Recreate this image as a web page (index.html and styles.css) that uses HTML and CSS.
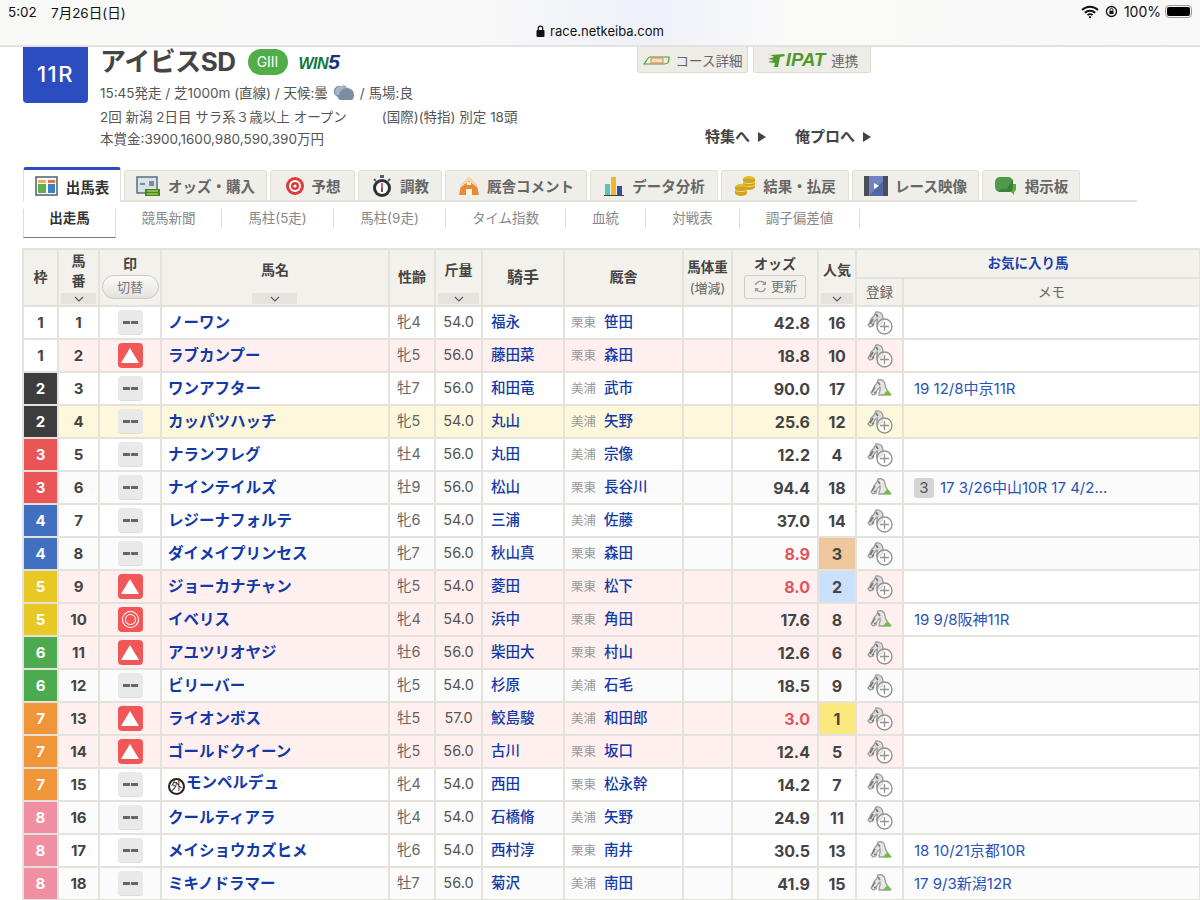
FILE: index.html
```html
<!DOCTYPE html>
<html lang="ja">
<head>
  <meta charset="UTF-8" />
  <title>アイビスSD 出馬表</title>
  <link rel="stylesheet" href="styles.css">
</head>
<body>
  <!-- 共通アイコン -->
  <svg class="sprite" width="0" height="0">
    <symbol id="horse-add" viewBox="0 0 26 24">
      <path d="M9 1c4-1 7 2 7 6 0 2 0 4-1 5l-5 3c-1-3 1-5 0-7l-3 3-1 4-3 1-2-2 2-3 1-3 3-3z" fill="#dcdcda" stroke="#9a9a98" stroke-width="1.300"/>
      <path d="M6 8l-3 5M9 3l2 3M7 13l-2 1" stroke="#777775" stroke-width="1.700" fill="none"/>
      <circle cx="17.500" cy="15.500" r="7.500" fill="#fff" fill-opacity=".6" stroke="#949492" stroke-width="1.400"/>
      <path d="M17.500 11v9M13 15.500h9" stroke="#949492" stroke-width="1.300"/>
    </symbol>
    <symbol id="horse-done" viewBox="0 0 26 24">
      <path d="M11 3c4-1 7 1 7 5 0 3 3 6 5 10H12c0-4 2-5 1-8l-3 3-1 4-3 1-2-2 2-3 1-3 3-4z" fill="#e6e6e3" stroke="#a0a09e" stroke-width="1.300"/>
      <path d="M8 10l-3 5M11 5l2 3M9 15l-2 1" stroke="#808080" stroke-width="1.700" fill="none"/>
      <path d="M16 18l4.500-5 4.500 5z" fill="#6fbf45"/>
    </symbol>
    <symbol id="chev" viewBox="0 0 10 6">
      <path d="M1 1l4 4 4-4" fill="none" stroke="#555" stroke-width="1.100"/>
    </symbol>
  </svg>

  <!-- ステータスバー -->
  <div class="statusbar">
    <div class="status-row">
      <span class="status-time">5:02</span>
      <span class="status-date">7月26日(日)</span>
      <span class="status-right">
        <svg width="18" height="13" viewBox="0 0 18 13"><path d="M1 5a11.500 11.500 0 0 1 16 0M3.800 7.800a7.500 7.500 0 0 1 10.400 0M6.500 10.200a3.500 3.500 0 0 1 5 0" fill="none" stroke="#111" stroke-width="1.900"/><circle cx="9" cy="12" r="1.100" fill="#111"/></svg>
        <svg width="13" height="13" viewBox="0 0 13 13"><circle cx="6.500" cy="6.500" r="5" fill="none" stroke="#111" stroke-width="1.300"/><rect x="4.400" y="5.800" width="4.200" height="3.300" fill="#111"/><path d="M5.200 5.800V4.700a1.300 1.300 0 0 1 2.600 0v1.100" fill="none" stroke="#111"/></svg>
        <span class="status-pct">100%</span>
        <span class="battery"><span class="battery-fill"></span></span>
      </span>
    </div>
    <div class="status-url">
      <svg width="9" height="12" viewBox="0 0 9 12"><rect x="0.500" y="5" width="8" height="7" rx="1" fill="#111"/><path d="M2.300 5V3.300a2.200 2.200 0 0 1 4.400 0V5" fill="none" stroke="#111" stroke-width="1.200"/></svg>
      <span>race.netkeiba.com</span>
    </div>
  </div>

  <!-- レース情報 -->
  <div class="race-head">
    <div class="race-num">11R</div>
    <div class="race-info">
      <div class="race-title">
        <h1>アイビスSD</h1>
        <span class="grade">GIII</span>
        <span class="win5"><b>WIN</b><i>5</i></span>
      </div>
      <div class="race-data1">
        15:45発走 / 芝1000m (直線) / 天候:曇
        <svg class="weather" width="22" height="17" viewBox="0 0 22 17"><path d="M5 13a5 5 0 0 1 3-11c2-1 5-1 6 2 4 0 7 3 7 7 0 3-1 5-3 5H8c-2 0-3-1-3-3z" fill="#7b8ea1"/><path d="M3 11a6 6 0 0 1 6-9c2 0 4 1 5 2-4 0-7 3-8 7z" fill="#a8b6c4"/></svg>
        / 馬場:良
      </div>
      <div class="race-data2"><span class="race-cond">2回 新潟 2日目 サラ系３歳以上 オープン</span><span>(国際)(特指) 別定 18頭</span></div>
      <div class="race-data2">本賞金:3900,1600,980,590,390万円</div>
    </div>
    <div class="race-side">
      <div class="race-btns">
        <a class="race-btn btn-course">
          <svg width="28" height="10" viewBox="0 0 28 10"><path d="M1 9h20c4 0 5-1 5-7H7C5 2 4 5 1 9z" fill="none" stroke="#4f9e3c" stroke-width="1.200"/><rect x="8" y="3" width="12" height="5" fill="#f3dcc0" stroke="#d98b4a"/></svg>
          コース詳細
        </a>
        <a class="race-btn btn-ipat">
          <svg width="20" height="16" viewBox="0 0 20 16"><path d="M1 1l4 2 13-1 1 2-5 1-2 10H8l1-4-7-1 6-2-6-1 6-2z" fill="#4d9a2a"/></svg>
          <b class="ipat-logo">IPAT</b>
          連携
        </a>
      </div>
      <div class="race-links">
        <a>特集へ<span class="tri-right"></span></a>
        <a>俺プロへ<span class="tri-right"></span></a>
      </div>
    </div>
  </div>

  <!-- タブ -->
  <div class="tabs">
    <a class="tab tab-active">
      <svg width="24" height="22" viewBox="0 0 24 22"><rect x="1" y="2" width="21" height="18" fill="#fff" stroke="#4a5f70" stroke-width="1.500"/><rect x="3" y="5" width="8" height="3" fill="#f0b23c"/><rect x="3" y="9" width="8" height="9" fill="#5fb04a"/><rect x="13" y="5" width="7" height="3" fill="#e8703a"/><rect x="13" y="9" width="7" height="9" fill="#3c7fc4"/></svg>
      出馬表
    </a>
    <a class="tab">
      <svg width="25" height="22" viewBox="0 0 25 22"><rect x="1" y="2" width="20" height="16" fill="#d8e2ea" stroke="#5c6f7e" stroke-width="1.500"/><rect x="4" y="8" width="5" height="2" fill="#7a8c9a"/><rect x="13" y="6" width="5" height="5" fill="#7a8c9a"/><rect x="9" y="14" width="15" height="7" fill="#3f8a1e"/><path d="M11 16h11M11 19h11" stroke="#e6e36a"/></svg>
      オッズ・購入
    </a>
    <a class="tab">
      <svg width="20" height="22" viewBox="0 0 20 22"><circle cx="10" cy="11" r="9" fill="#e03a3a"/><circle cx="10" cy="11" r="6" fill="#fff"/><circle cx="10" cy="11" r="4" fill="#e03a3a"/><circle cx="10" cy="11" r="1.600" fill="#fff"/></svg>
      予想
    </a>
    <a class="tab">
      <svg width="22" height="24" viewBox="0 0 22 24"><circle cx="11" cy="14" r="9" fill="#2a3138"/><circle cx="11" cy="14" r="6" fill="#fff"/><path d="M11 14V9" stroke="#d33" stroke-width="1.600"/><path d="M11 14v4" stroke="#333" stroke-width="1.600"/><rect x="9" y="1" width="4" height="3" fill="#55606a"/><path d="M3 5l2 2M19 5l-2 2" stroke="#55606a" stroke-width="2"/></svg>
      調教
    </a>
    <a class="tab">
      <svg width="22" height="22" viewBox="0 0 22 22"><path d="M1 20l2-10 8-8 8 8 2 10z" fill="#e88a3a"/><path d="M3 10l8-8 8 8 1 3-9-7-9 7z" fill="#f4d9b8"/><rect x="8" y="14" width="6" height="6" fill="#fff3d8"/><rect x="9" y="7" width="4" height="3" fill="#fff3d8"/></svg>
      厩舎コメント
    </a>
    <a class="tab">
      <svg width="22" height="22" viewBox="0 0 22 22"><rect x="2" y="9" width="5" height="11" fill="#5cc4b0"/><rect x="8" y="2" width="5" height="18" fill="#f2b632"/><rect x="14" y="11" width="5" height="9" fill="#2e4fa8"/><path d="M1 20.500h20" stroke="#444"/></svg>
      データ分析
    </a>
    <a class="tab">
      <svg width="22" height="24" viewBox="0 0 22 24"><ellipse cx="15" cy="5" rx="6" ry="3" fill="#e0b92c"/><rect x="9" y="5" width="12" height="8" fill="#cfa51f"/><ellipse cx="15" cy="13" rx="6" ry="3" fill="#cfa51f"/><path d="M9 8c2 2 10 2 12 0M9 11c2 2 10 2 12 0" stroke="#f1da7a" fill="none"/><ellipse cx="7" cy="13" rx="6" ry="3" fill="#e0b92c"/><rect x="1" y="13" width="12" height="6" fill="#cfa51f"/><ellipse cx="7" cy="19" rx="6" ry="3" fill="#cfa51f"/><path d="M1 16c2 2 10 2 12 0" stroke="#f1da7a" fill="none"/></svg>
      結果・払戻
    </a>
    <a class="tab">
      <svg width="24" height="22" viewBox="0 0 24 22"><rect x="0" y="1" width="24" height="20" fill="#4a4f5c"/><rect x="5" y="1" width="14" height="20" fill="#6f84c0"/><path d="M5 21L19 6v15z" fill="#5166a3"/><path d="M10 8l5 3-5 3z" fill="#fff"/></svg>
      レース映像
    </a>
    <a class="tab">
      <svg width="24" height="22" viewBox="0 0 24 22"><path d="M16 9h6v6l-2 2v3l-3-3h-5z" fill="#5cae3c"/><rect x="1" y="2" width="18" height="15" rx="5" fill="#4f9a48"/><path d="M4 17l3-3h6l6-10v8c0 3-2 5-5 5z" fill="#3f7f3a"/></svg>
      掲示板
    </a>
  </div>

  <div class="subnav">
    <a class="sub sub-active">出走馬</a>
    <a class="sub">競馬新聞</a>
    <a class="sub">馬柱(5走)</a>
    <a class="sub">馬柱(9走)</a>
    <a class="sub">タイム指数</a>
    <a class="sub">血統</a>
    <a class="sub">対戦表</a>
    <a class="sub">調子偏差値</a>
  </div>

  <!-- 出馬表 -->
  <div class="table-wrap">
    <table class="shutuba">
      <colgroup>
        <col class="c-waku"><col class="c-umaban"><col class="c-mark"><col class="c-name"><col class="c-age"><col class="c-kin"><col class="c-jockey"><col class="c-trainer"><col class="c-weight"><col class="c-odds"><col class="c-pop"><col class="c-reg"><col class="c-memo">
      </colgroup>
      <thead>
        <tr>
          <th rowspan="2">枠</th>
          <th rowspan="2" class="th-sort"><span class="th-stack">馬<br>番</span><span class="sort"><svg width="10" height="6"><use href="#chev"/></svg></span></th>
          <th rowspan="2"><span class="th-mark">印</span><span class="pill">切替</span></th>
          <th rowspan="2" class="th-sort"><span class="th-low">馬名</span><span class="sort sort-wide"><svg width="10" height="6"><use href="#chev"/></svg></span></th>
          <th rowspan="2">性齢</th>
          <th rowspan="2" class="th-sort"><span class="th-low">斤量</span><span class="sort"><svg width="10" height="6"><use href="#chev"/></svg></span></th>
          <th rowspan="2" class="th-jockey">騎手</th>
          <th rowspan="2">厩舎</th>
          <th rowspan="2" class="th-weight">馬体重<small>(増減)</small></th>
          <th rowspan="2"><span class="th-odds">オッズ</span><span class="reload"><svg width="15" height="15" viewBox="0 0 15 15"><path d="M2.500 6a5.200 5.200 0 0 1 9.500-1M12.500 9a5.200 5.200 0 0 1-9.500 1" fill="none" stroke="#999" stroke-width="1.400"/><path d="M13 2v4H9zM2 13V9h4z" fill="#999"/></svg>更新</span></th>
          <th rowspan="2" class="th-sort"><span class="th-low">人気</span><span class="sort"><svg width="10" height="6"><use href="#chev"/></svg></span></th>
          <th colspan="2" class="th-fav">お気に入り馬</th>
        </tr>
        <tr>
          <th class="th-sub">登録</th>
          <th class="th-sub">メモ</th>
        </tr>
      </thead>
      <tbody>
        <tr>
          <td class="waku w1">1</td><td class="umaban">1</td><td class="mark"><span class="mk mk-none"><i></i><i></i></span></td><td class="name">ノーワン</td><td class="age">牝4</td><td class="kin">54.0</td><td class="jockey">福永</td><td class="trainer"><span>栗東</span>笹田</td><td></td><td class="odds">42.8</td><td class="pop">16</td><td class="reg"><svg width="26" height="24"><use href="#horse-add"/></svg></td><td class="memo"></td>
        </tr>
        <tr class="hl">
          <td class="waku w1">1</td><td class="umaban">2</td><td class="mark"><span class="mk mk-tri"></span></td><td class="name">ラブカンプー</td><td class="age">牝5</td><td class="kin">56.0</td><td class="jockey">藤田菜</td><td class="trainer"><span>栗東</span>森田</td><td></td><td class="odds">18.8</td><td class="pop">10</td><td class="reg"><svg width="26" height="24"><use href="#horse-add"/></svg></td><td class="memo"></td>
        </tr>
        <tr>
          <td class="waku w2">2</td><td class="umaban">3</td><td class="mark"><span class="mk mk-none"><i></i><i></i></span></td><td class="name">ワンアフター</td><td class="age">牡7</td><td class="kin">56.0</td><td class="jockey">和田竜</td><td class="trainer"><span>美浦</span>武市</td><td></td><td class="odds">90.0</td><td class="pop">17</td><td class="reg"><svg width="26" height="24"><use href="#horse-done"/></svg></td><td class="memo"><a>19 12/8中京11R</a></td>
        </tr>
        <tr class="fav">
          <td class="waku w2">2</td><td class="umaban">4</td><td class="mark"><span class="mk mk-none"><i></i><i></i></span></td><td class="name">カッパツハッチ</td><td class="age">牝5</td><td class="kin">54.0</td><td class="jockey">丸山</td><td class="trainer"><span>美浦</span>矢野</td><td></td><td class="odds">25.6</td><td class="pop">12</td><td class="reg"><svg width="26" height="24"><use href="#horse-add"/></svg></td><td class="memo"></td>
        </tr>
        <tr>
          <td class="waku w3">3</td><td class="umaban">5</td><td class="mark"><span class="mk mk-none"><i></i><i></i></span></td><td class="name">ナランフレグ</td><td class="age">牡4</td><td class="kin">56.0</td><td class="jockey">丸田</td><td class="trainer"><span>美浦</span>宗像</td><td></td><td class="odds">12.2</td><td class="pop">4</td><td class="reg"><svg width="26" height="24"><use href="#horse-add"/></svg></td><td class="memo"></td>
        </tr>
        <tr class="alt">
          <td class="waku w3">3</td><td class="umaban">6</td><td class="mark"><span class="mk mk-none"><i></i><i></i></span></td><td class="name">ナインテイルズ</td><td class="age">牡9</td><td class="kin">56.0</td><td class="jockey">松山</td><td class="trainer"><span>栗東</span>長谷川</td><td></td><td class="odds">94.4</td><td class="pop">18</td><td class="reg"><svg width="26" height="24"><use href="#horse-done"/></svg></td><td class="memo"><em>3</em><a>17 3/26中山10R 17 4/2...</a></td>
        </tr>
        <tr>
          <td class="waku w4">4</td><td class="umaban">7</td><td class="mark"><span class="mk mk-none"><i></i><i></i></span></td><td class="name">レジーナフォルテ</td><td class="age">牝6</td><td class="kin">54.0</td><td class="jockey">三浦</td><td class="trainer"><span>美浦</span>佐藤</td><td></td><td class="odds">37.0</td><td class="pop">14</td><td class="reg"><svg width="26" height="24"><use href="#horse-add"/></svg></td><td class="memo"></td>
        </tr>
        <tr class="alt">
          <td class="waku w4">4</td><td class="umaban">8</td><td class="mark"><span class="mk mk-none"><i></i><i></i></span></td><td class="name">ダイメイプリンセス</td><td class="age">牝7</td><td class="kin">56.0</td><td class="jockey">秋山真</td><td class="trainer"><span>栗東</span>森田</td><td></td><td class="odds low">8.9</td><td class="pop pop3">3</td><td class="reg"><svg width="26" height="24"><use href="#horse-add"/></svg></td><td class="memo"></td>
        </tr>
        <tr class="hl">
          <td class="waku w5">5</td><td class="umaban">9</td><td class="mark"><span class="mk mk-tri"></span></td><td class="name">ジョーカナチャン</td><td class="age">牝5</td><td class="kin">54.0</td><td class="jockey">菱田</td><td class="trainer"><span>栗東</span>松下</td><td></td><td class="odds low">8.0</td><td class="pop pop2">2</td><td class="reg"><svg width="26" height="24"><use href="#horse-add"/></svg></td><td class="memo"></td>
        </tr>
        <tr class="hl">
          <td class="waku w5">5</td><td class="umaban">10</td><td class="mark"><span class="mk mk-dbl"></span></td><td class="name">イベリス</td><td class="age">牝4</td><td class="kin">54.0</td><td class="jockey">浜中</td><td class="trainer"><span>栗東</span>角田</td><td></td><td class="odds">17.6</td><td class="pop">8</td><td class="reg"><svg width="26" height="24"><use href="#horse-done"/></svg></td><td class="memo"><a>19 9/8阪神11R</a></td>
        </tr>
        <tr class="hl">
          <td class="waku w6">6</td><td class="umaban">11</td><td class="mark"><span class="mk mk-tri"></span></td><td class="name">アユツリオヤジ</td><td class="age">牡6</td><td class="kin">56.0</td><td class="jockey">柴田大</td><td class="trainer"><span>栗東</span>村山</td><td></td><td class="odds">12.6</td><td class="pop">6</td><td class="reg"><svg width="26" height="24"><use href="#horse-add"/></svg></td><td class="memo"></td>
        </tr>
        <tr class="alt">
          <td class="waku w6">6</td><td class="umaban">12</td><td class="mark"><span class="mk mk-none"><i></i><i></i></span></td><td class="name">ビリーバー</td><td class="age">牝5</td><td class="kin">54.0</td><td class="jockey">杉原</td><td class="trainer"><span>美浦</span>石毛</td><td></td><td class="odds">18.5</td><td class="pop">9</td><td class="reg"><svg width="26" height="24"><use href="#horse-add"/></svg></td><td class="memo"></td>
        </tr>
        <tr class="hl">
          <td class="waku w7">7</td><td class="umaban">13</td><td class="mark"><span class="mk mk-tri"></span></td><td class="name">ライオンボス</td><td class="age">牡5</td><td class="kin">57.0</td><td class="jockey">鮫島駿</td><td class="trainer"><span>美浦</span>和田郎</td><td></td><td class="odds low">3.0</td><td class="pop pop1">1</td><td class="reg"><svg width="26" height="24"><use href="#horse-add"/></svg></td><td class="memo"></td>
        </tr>
        <tr class="hl">
          <td class="waku w7">7</td><td class="umaban">14</td><td class="mark"><span class="mk mk-tri"></span></td><td class="name">ゴールドクイーン</td><td class="age">牝5</td><td class="kin">56.0</td><td class="jockey">古川</td><td class="trainer"><span>栗東</span>坂口</td><td></td><td class="odds">12.4</td><td class="pop">5</td><td class="reg"><svg width="26" height="24"><use href="#horse-add"/></svg></td><td class="memo"></td>
        </tr>
        <tr>
          <td class="waku w7">7</td><td class="umaban">15</td><td class="mark"><span class="mk mk-none"><i></i><i></i></span></td><td class="name"><span class="gai">外</span>モンペルデュ</td><td class="age">牝4</td><td class="kin">54.0</td><td class="jockey">西田</td><td class="trainer"><span>栗東</span>松永幹</td><td></td><td class="odds">14.2</td><td class="pop">7</td><td class="reg"><svg width="26" height="24"><use href="#horse-add"/></svg></td><td class="memo"></td>
        </tr>
        <tr class="alt">
          <td class="waku w8">8</td><td class="umaban">16</td><td class="mark"><span class="mk mk-none"><i></i><i></i></span></td><td class="name">クールティアラ</td><td class="age">牝4</td><td class="kin">54.0</td><td class="jockey">石橋脩</td><td class="trainer"><span>美浦</span>矢野</td><td></td><td class="odds">24.9</td><td class="pop">11</td><td class="reg"><svg width="26" height="24"><use href="#horse-add"/></svg></td><td class="memo"></td>
        </tr>
        <tr>
          <td class="waku w8">8</td><td class="umaban">17</td><td class="mark"><span class="mk mk-none"><i></i><i></i></span></td><td class="name">メイショウカズヒメ</td><td class="age">牝6</td><td class="kin">54.0</td><td class="jockey">西村淳</td><td class="trainer"><span>栗東</span>南井</td><td></td><td class="odds">30.5</td><td class="pop">13</td><td class="reg"><svg width="26" height="24"><use href="#horse-done"/></svg></td><td class="memo"><a>18 10/21京都10R</a></td>
        </tr>
        <tr class="alt">
          <td class="waku w8">8</td><td class="umaban">18</td><td class="mark"><span class="mk mk-none"><i></i><i></i></span></td><td class="name">ミキノドラマー</td><td class="age">牡7</td><td class="kin">56.0</td><td class="jockey">菊沢</td><td class="trainer"><span>美浦</span>南田</td><td></td><td class="odds">41.9</td><td class="pop">15</td><td class="reg"><svg width="26" height="24"><use href="#horse-done"/></svg></td><td class="memo"><a>17 9/3新潟12R</a></td>
        </tr>
      </tbody>
    </table>
  </div>
</body>
</html>
```

FILE: styles.css
```css
html, body {
  height: 900px;
  overflow: hidden;
}

body {
  margin: 0;
  background: #fff;
  color: #444;
  font-family: Inter, "Noto Sans CJK JP", "Noto Sans", sans-serif;
}

.sprite {
  display: block;
  height: 0;
}

/* status bar */
.statusbar {
  height: 45px;
  box-sizing: content-box;
  border-bottom: 2px solid #e2e2e2;
  background: linear-gradient(90deg, #f8f8f7 0%, #f8f8f8 40%, #eff1f9 54%, #fafaf9 66%, #f8f8f8 100%);
  color: #111;
}

.status-row {
  display: flex;
  align-items: center;
  height: 23px;
  padding: 0 8px;
  font-size: 13.500px;
}

.status-time {
  width: 43px;
}

.status-right {
  margin-left: auto;
  display: flex;
  align-items: center;
  gap: 6px;
}

.status-pct {
  font-size: 14px;
  margin-right: -2px;
}

.battery {
  display: block;
  width: 27px;
  height: 13px;
  padding: 1px;
  box-sizing: border-box;
  border: 1px solid #999;
  border-radius: 4px;
}

.battery-fill {
  display: block;
  height: 100%;
  background: #000;
  border-radius: 2px;
}

.status-url {
  display: flex;
  justify-content: center;
  align-items: center;
  gap: 5px;
  height: 16px;
  font-size: 13px;
}

/* race header */
.race-head {
  display: flex;
  height: 120px;
  padding: 0 329px 0 23px;
}

.race-num {
  width: 65px;
  height: 56px;
  border-radius: 0 0 4px 4px;
  background: #2c4dc0;
  color: #fff;
  font-size: 22px;
  font-weight: 500;
  letter-spacing: 1.500px;
  line-height: 54px;
  text-align: center;
}

.race-info {
  flex: 1;
  margin-left: 12px;
  font-size: 13.500px;
  color: #555;
}

.race-title {
  display: flex;
  align-items: center;
  height: 29px;
}

.race-title h1 {
  margin: 0;
  font-size: 26px;
  font-weight: 700;
  color: #444;
  line-height: 29px;
  letter-spacing: -0.500px;
}

.grade {
  width: 40px;
  height: 26px;
  margin-left: 12px;
  border-radius: 13px;
  background: #50ad48;
  color: #fff;
  font-size: 14px;
  line-height: 26px;
  text-align: center;
}

.win5 {
  margin-left: 11px;
  font-family: "Liberation Sans", sans-serif;
  font-style: italic;
  font-weight: 700;
  font-size: 16px;
  color: #0d7a3e;
}

.win5 b {
  letter-spacing: -0.500px;
}

.win5 i {
  color: #1c3280;
  font-size: 21px;
}

.race-data1 {
  display: flex;
  align-items: center;
  gap: 5px;
  height: 20px;
  margin-top: 6px;
}

.race-data2 {
  height: 22px;
  line-height: 22px;
}

.race-data2:nth-child(3) {
  margin-top: 4px;
}

.race-cond {
  margin-right: 35px;
}

.race-side {
  display: flex;
  flex-direction: column;
  align-items: flex-end;
}

.race-btns {
  display: flex;
  gap: 5px;
  white-space: nowrap;
}

.race-btn {
  display: flex;
  align-items: center;
  justify-content: center;
  height: 26px;
  box-sizing: border-box;
  border: 1px solid #dcd9d0;
  border-top: none;
  border-radius: 0 0 3px 3px;
  background: #eeece6;
  color: #666;
  font-size: 13.500px;
}

.btn-course {
  width: 111px;
  gap: 5px;
}

.btn-ipat {
  width: 118px;
  gap: 6px;
}

.ipat-logo {
  margin-left: -6px;
  font-family: "Liberation Sans", sans-serif;
  font-style: italic;
  font-size: 18.500px;
  color: #4d9a2a;
}

.race-links {
  display: flex;
  gap: 29px;
  margin-top: 52px;
  font-size: 15px;
  font-weight: 700;
  white-space: nowrap;
  color: #444;
}

.tri-right {
  display: inline-block;
  margin-left: 8px;
  border-left: 8px solid #444;
  border-top: 5px solid transparent;
  border-bottom: 5px solid transparent;
}

/* tabs */
.tabs {
  display: grid;
  grid-template-columns: 98px 143px 85px 84px 142px 128px 128px 127px 98px;
  gap: 3px;
  align-items: end;
  height: 33px;
  width: 1114px;
  margin-left: 23px;
  border-bottom: 2px solid #e2e0d8;
}

.tab {
  display: flex;
  align-items: center;
  justify-content: center;
  gap: 7px;
  height: 30px;
  box-sizing: border-box;
  border: 1px solid #e2e0d8;
  border-bottom: none;
  border-radius: 3px 3px 0 0;
  background: #efeee9;
  color: #666;
  font-size: 14.500px;
  font-weight: 700;
  white-space: nowrap;
}

.tab-active {
  height: 35px;
  margin-bottom: -2px;
  border-top: 3px solid #2c4dc0;
  background: #fff;
  color: #333;
}

.subnav {
  display: grid;
  grid-template-columns: 93px 106px 112px 112px 120px 80px 94px 120px;
  width: 837px;
  margin: 7px 0 0 23px;
  height: 29px;
}

.sub {
  height: 19px;
  border-right: 1px solid #dedcd4;
  color: #888;
  font-size: 13.500px;
  line-height: 19px;
  text-align: center;
}

.sub-active {
  height: 29px;
  border-bottom: 1px solid #777;
  border-left: 1px solid #dedcd4;
  color: #333;
  font-weight: 700;
  box-sizing: border-box;
}

/* main table */
.table-wrap {
  margin: 10px 0 0 22px;
  width: 1178px;
  overflow: hidden;
}

.shutuba {
  border-collapse: collapse;
  table-layout: fixed;
  width: 1177px;
}

.c-waku { width: 35px; }
.c-umaban { width: 41px; }
.c-mark { width: 62px; }
.c-name { width: 228px; }
.c-age { width: 46px; }
.c-kin { width: 47px; }
.c-jockey { width: 82px; }
.c-trainer { width: 119px; }
.c-weight { width: 49px; }
.c-odds { width: 86px; }
.c-pop { width: 38px; }
.c-reg { width: 47px; }
.c-memo { width: 297px; }

.shutuba th,
.shutuba td {
  border: 2px solid #e4e2da;
  padding: 0;
}

.shutuba th {
  position: relative;
  height: 26px;
  background: #f3f1ec;
  color: #444;
  font-size: 14px;
  font-weight: 700;
  line-height: 1.2;
  text-align: center;
}

.shutuba thead tr:first-child th {
  height: 27px;
}

.shutuba .th-sub {
  color: #666;
  font-size: 13.500px;
  font-weight: 400;
}

.shutuba .th-fav {
  color: #1a3faa;
  font-size: 13.500px;
}

.shutuba .th-jockey {
  font-size: 16px;
}

.th-stack {
  display: block;
  margin-bottom: 14px;
  line-height: 20px;
}

.th-low {
  display: block;
  margin-bottom: 14px;
}

.sort {
  position: absolute;
  left: 2px;
  right: 2px;
  bottom: 1px;
  display: flex;
  align-items: center;
  justify-content: center;
  height: 11px;
  background: #e5e3dd;
}

.sort-wide {
  left: 90px;
  right: 91px;
}

.th-mark,
.th-odds {
  display: block;
  margin-bottom: 2px;
}

.pill {
  display: block;
  width: 55px;
  height: 22px;
  margin: 0 auto;
  border: 1px solid #ccc9c0;
  border-radius: 12px;
  background: linear-gradient(#fbfbfa, #e4e2dd);
  color: #777;
  font-size: 13px;
  font-weight: 400;
  line-height: 22px;
}

.reload {
  display: flex;
  align-items: center;
  justify-content: center;
  gap: 3px;
  width: 60px;
  height: 22px;
  margin: 0 auto;
  border: 1px solid #cfccc3;
  border-radius: 3px;
  color: #777;
  font-size: 13px;
  font-weight: 400;
}

.shutuba .th-weight {
  font-size: 13.500px;
  white-space: nowrap;
}

.th-weight small {
  display: block;
  margin-top: 6px;
  color: #666;
  font-size: 13px;
  font-weight: 400;
}

/* table rows */
.shutuba td {
  height: 31px;
  font-size: 14.500px;
  line-height: 1;
  text-align: center;
  white-space: nowrap;
  background: #fff;
}

.alt td { background: #fbfbfb; }
.hl td { background: #fff0ef; }
.hl td.memo { background: #fff; }
.fav td, .fav td.memo { background: #fdf8dc; }

.shutuba td.waku {
  font-size: 15px;
  font-weight: 700;
  color: #fff;
}

.shutuba td.w1 { background: #fff; color: #444; }
.shutuba td.w2 { background: #3d3d3d; }
.shutuba td.w3 { background: #e95455; }
.shutuba td.w4 { background: #4270c0; }
.shutuba td.w5 { background: #e8c824; }
.shutuba td.w6 { background: #4bab4e; }
.shutuba td.w7 { background: #f0953a; }
.shutuba td.w8 { background: #f18fa2; }

.shutuba td.umaban {
  font-size: 15px;
  font-weight: 700;
}

.mk {
  display: flex;
  align-items: center;
  justify-content: center;
  gap: 1px;
  width: 25px;
  height: 25px;
  margin: 0 auto;
  border-radius: 4px;
}

.mk-none {
  background: #e9e9e9;
  border-bottom: 1px solid #ddd;
  box-sizing: border-box;
}

.mk-none i {
  display: block;
  width: 7px;
  height: 3px;
  background: #666;
}

.mk-tri {
  background: #f25757;
}

.mk-tri::after {
  content: "";
  border-left: 9px solid transparent;
  border-right: 9px solid transparent;
  border-bottom: 15px solid #fff;
}

.mk-dbl {
  background: #f25757;
}

.mk-dbl::after {
  content: "";
  width: 9px;
  height: 9px;
  border: 1px solid #fff;
  border-radius: 50%;
  box-shadow: 0 0 0 2px #f25757, 0 0 0 3px #fff;
}

.shutuba td.name {
  padding-left: 6px;
  color: #1239a8;
  font-size: 15.500px;
  font-weight: 700;
  text-align: left;
}

.gai {
  display: inline-block;
  width: 17px;
  height: 17px;
  margin-right: 1px;
  box-sizing: border-box;
  border: 2px solid #222;
  border-radius: 50%;
  color: #222;
  font-size: 11px;
  font-weight: 400;
  line-height: 13px;
  text-align: center;
  vertical-align: -2px;
}

.shutuba td.age {
  padding-left: 7px;
  color: #666;
  text-align: left;
}

.kin {
  color: #555;
}

.shutuba td.jockey {
  padding-left: 8px;
  color: #1239a8;
  font-weight: 500;
  text-align: left;
}

.shutuba td.trainer {
  padding-left: 6px;
  color: #1239a8;
  font-weight: 500;
  text-align: left;
}

.trainer span {
  margin-right: 8px;
  color: #999;
  font-size: 12.500px;
  font-weight: 400;
}

.shutuba td.odds {
  padding-right: 7px;
  color: #444;
  font-size: 16px;
  font-weight: 700;
  text-align: right;
}

.shutuba td.low {
  color: #e4535a;
}

.shutuba td.pop {
  font-size: 16px;
  font-weight: 700;
}

.shutuba td.pop1 { background: #fbe87f; }
.shutuba td.pop2 { background: #cbe0fb; }
.shutuba td.pop3 { background: #efc79d; }

.reg svg {
  display: block;
  margin: 0 auto;
}

.shutuba td.memo {
  padding-left: 10px;
  color: #2a52b8;
  text-align: left;
  font-size: 15px;
}

.memo em {
  display: inline-block;
  width: 20px;
  height: 20px;
  margin-right: 6px;
  border-radius: 3px;
  background: #d4d4d4;
  color: #555;
  font-style: normal;
  line-height: 20px;
  text-align: center;
}
```
